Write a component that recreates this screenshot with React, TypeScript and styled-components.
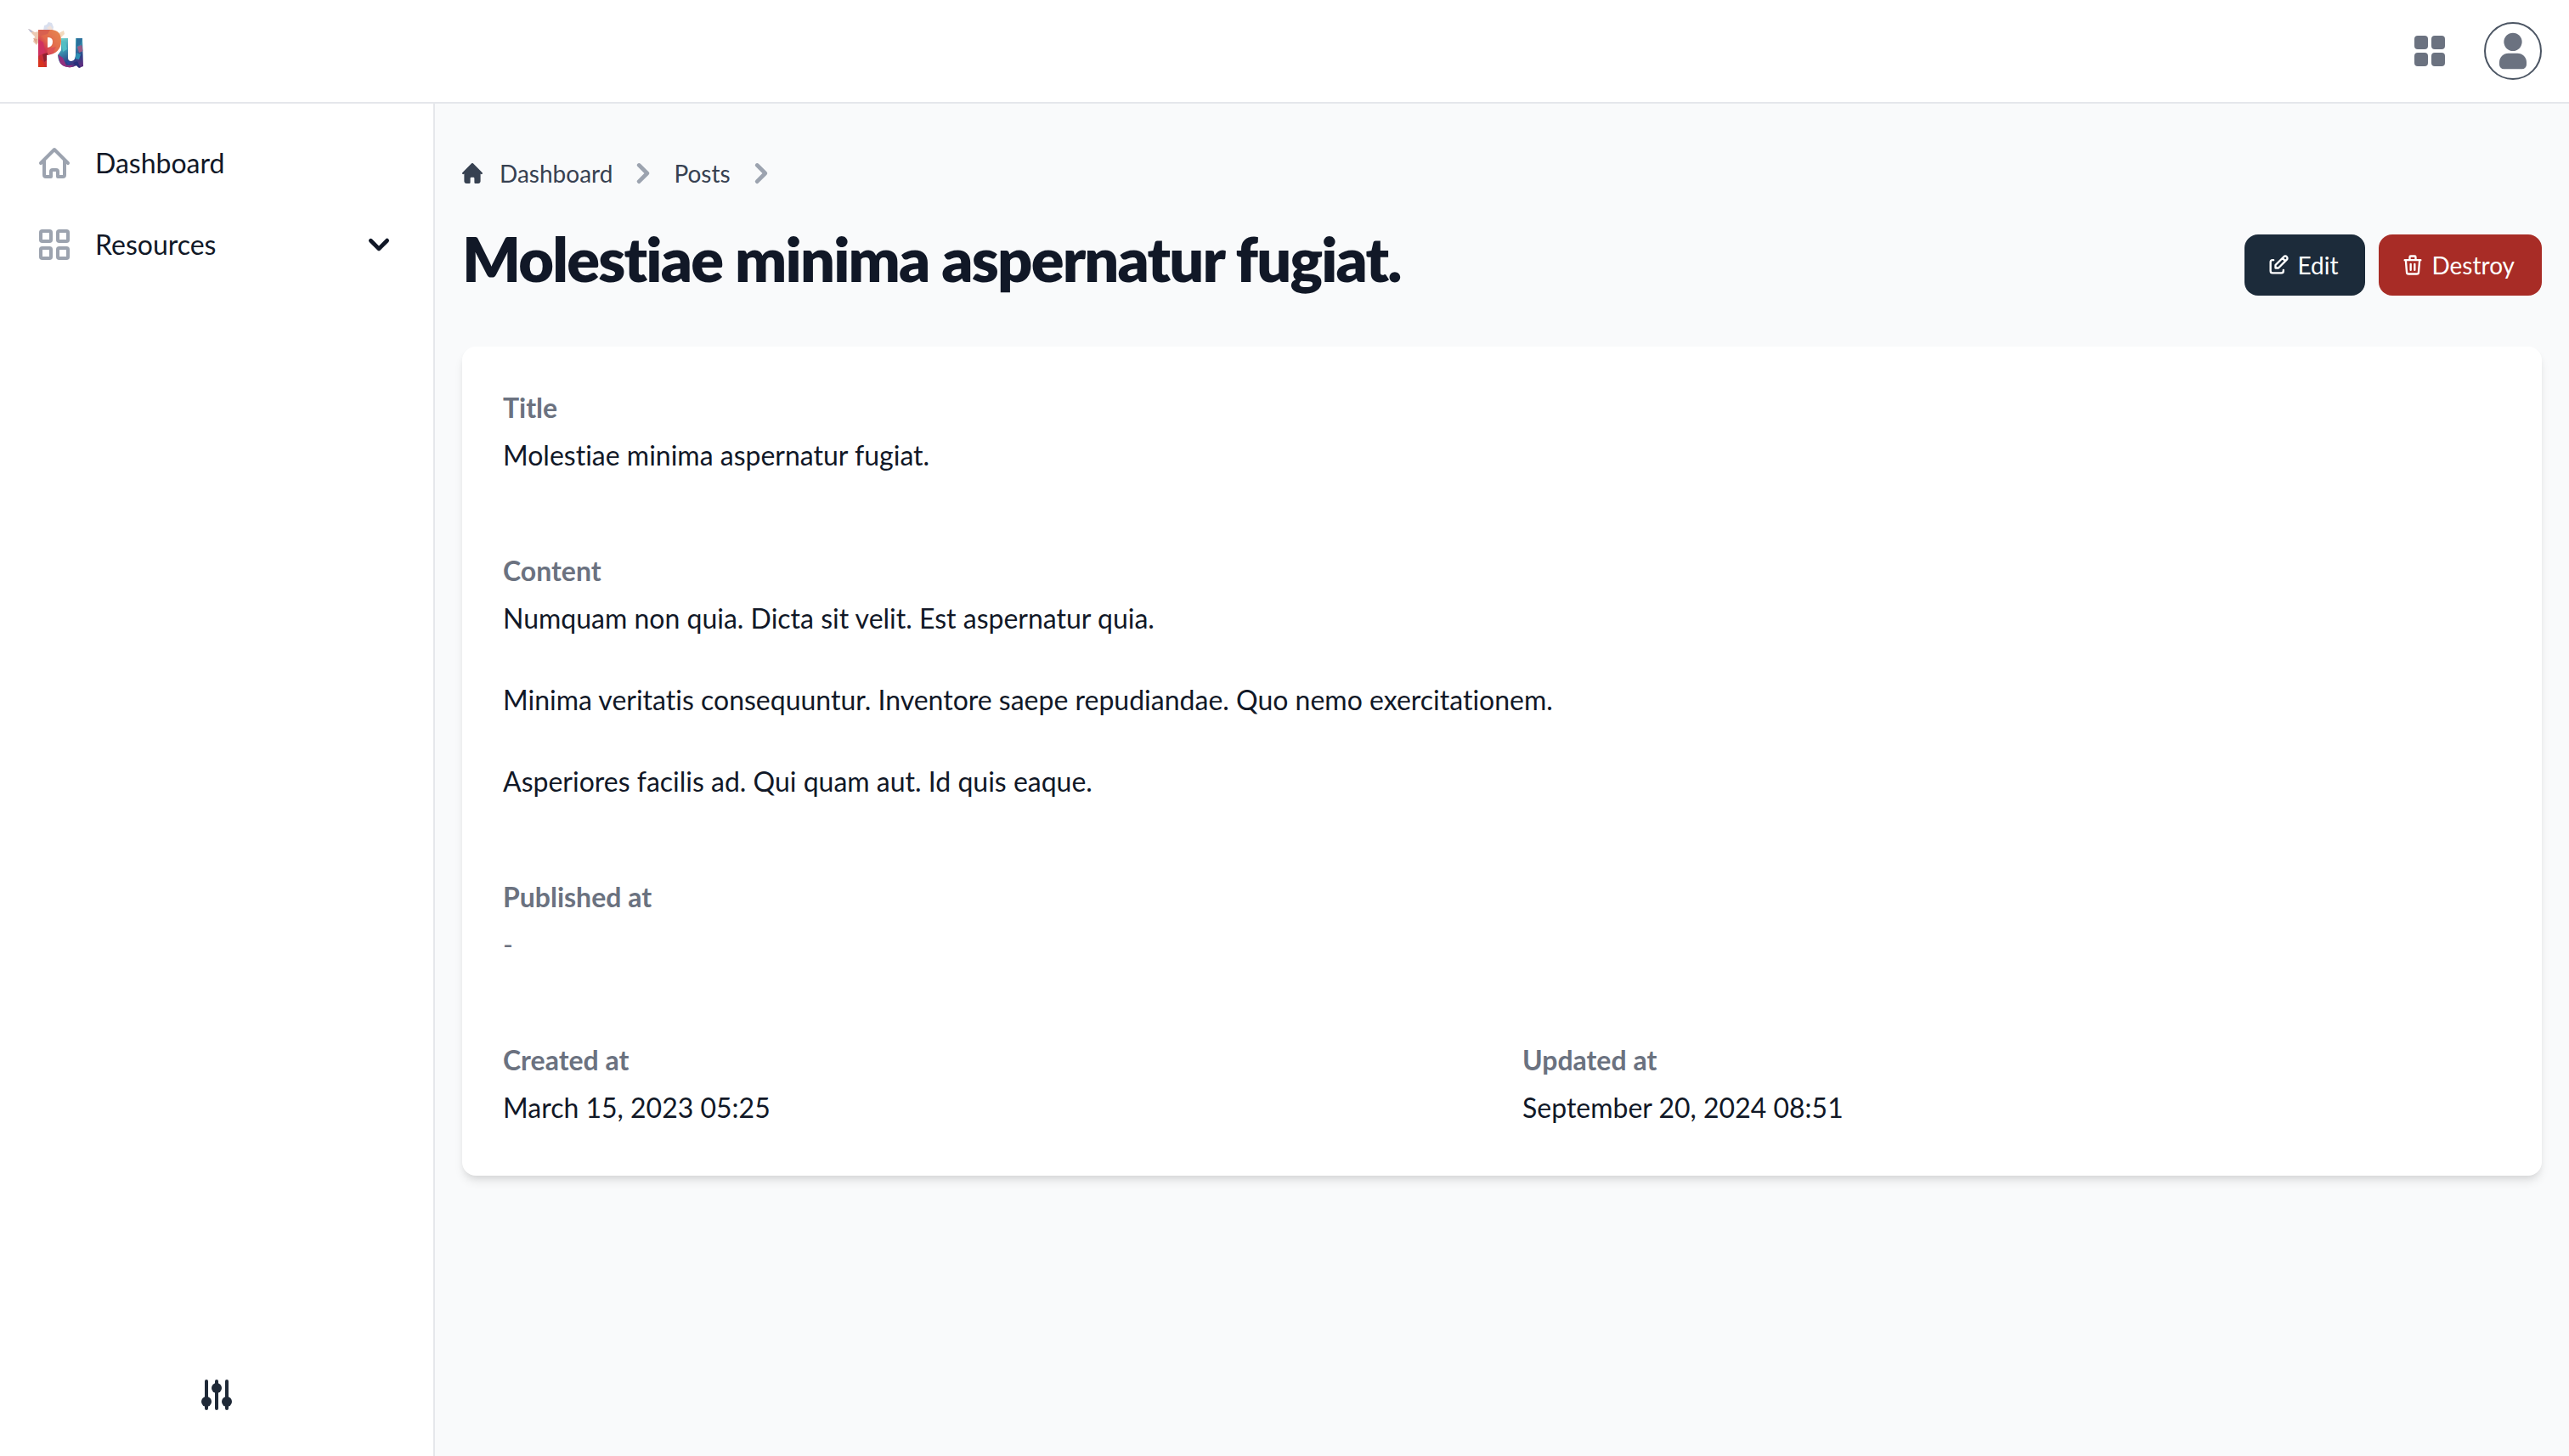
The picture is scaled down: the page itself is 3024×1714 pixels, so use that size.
import React from "react";
import styled, { createGlobalStyle } from "styled-components";

const GlobalStyle = createGlobalStyle`
  *, *::before, *::after { box-sizing: border-box; }
  body {
    margin: 0;
    background: #f9fafb;
    color: #111827;
    font: 400 32px/48px Lato, "Liberation Sans", sans-serif;
    font-variant-ligatures: none;
  }
  h1, p, dl, dd, ul, ol { margin: 0; padding: 0; }
  ul, ol { list-style: none; }
  a { color: inherit; text-decoration: none; }
  button { border: 0; background: none; padding: 0; color: inherit; font: inherit; cursor: pointer; }
  svg { display: block; flex: none; }
`;

const Shell = styled.div`
  display: flex;
  flex-direction: column;
  min-height: 100vh;
`;

const TopBar = styled.header`
  display: flex;
  align-items: center;
  justify-content: space-between;
  height: 122px;
  padding: 0 32px;
  background: #fff;
  border-bottom: 2px solid #e5e7eb;
`;

const TopActions = styled.div`
  display: flex;
  align-items: center;
  gap: 40px;
  color: #6b7280;
`;

const AvatarButton = styled.button`
  border: 2px solid #4b5563;
  border-radius: 50%;
`;

const Body = styled.div`
  display: flex;
  flex: 1;
`;

const Sidebar = styled.aside`
  display: flex;
  flex-direction: column;
  justify-content: space-between;
  flex: none;
  width: 512px;
  padding: 30px 24px 48px;
  background: #fff;
  border-right: 2px solid #e5e7eb;
`;

const NavList = styled.ul`
  display: flex;
  flex-direction: column;
  gap: 16px;
`;

const NavRow = styled.a`
  display: flex;
  align-items: center;
  width: 100%;
  padding: 16px;
  gap: 24px;
  text-align: left;
  > svg:first-child { color: #9ca3af; }
`;

const NavLabel = styled.span`
  flex: 1;
`;

const SettingsButton = styled.button`
  align-self: center;
  color: #1f2937;
`;

const Main = styled.main`
  flex: 1;
  min-width: 0;
  padding: 58px 32px 32px;
`;

const Crumbs = styled.ol`
  display: flex;
  align-items: center;
  gap: 12px;
  color: #374151;
  font-size: 28px;
  line-height: 40px;
  > li > svg { color: #9ca3af; }
`;

const Crumb = styled.li`
  display: flex;
  align-items: center;
  gap: 12px;
`;

const CrumbLink = styled.a`
  display: flex;
  align-items: center;
  gap: 20px;
`;

const TitleRow = styled.div`
  display: flex;
  align-items: center;
  justify-content: space-between;
  margin: 36px 0 48px;
`;

const Title = styled.h1`
  margin-bottom: 16px;
  font-size: 72px;
  line-height: 80px;
  font-weight: 800;
  letter-spacing: -0.025em;
`;

const Actions = styled.div`
  display: flex;
  gap: 16px;
`;

const ActionButton = styled.button<{ $color: string }>`
  display: flex;
  align-items: center;
  gap: 8px;
  padding: 16px 32px 16px 26px;
  border-radius: 16px;
  background: ${(p) => p.$color};
  color: #fff;
  font-size: 28px;
  line-height: 40px;
`;

const Card = styled.dl`
  display: grid;
  grid-template-columns: 1fr 1fr;
  gap: 80px 48px;
  padding: 48px;
  border-radius: 16px;
  background: #fff;
  box-shadow: 0 8px 12px -2px rgba(0, 0, 0, 0.1), 0 4px 8px -4px rgba(0, 0, 0, 0.1);
`;

const Field = styled.div<{ $wide?: boolean }>`
  grid-column: ${(p) => (p.$wide ? "1 / -1" : "auto")};
  padding-bottom: 8px;
`;

const FieldName = styled.dt`
  margin-bottom: 8px;
  color: #6b7280;
  font-weight: 700;
`;

const FieldValue = styled.dd<{ $muted?: boolean }>`
  color: ${(p) => (p.$muted ? "#6b7280" : "inherit")};
  white-space: pre-line;
`;

const Icon = ({ size, box = 24, children }: { size: number; box?: number; children: React.ReactNode }) => (
  <svg width={size} height={size} viewBox={`0 0 ${box} ${box}`} fill="none" aria-hidden="true">
    {children}
  </svg>
);

const stroke = { stroke: "currentColor", strokeWidth: 2, strokeLinecap: "round", strokeLinejoin: "round" } as const;

const pShape = "M13 11h16q11 1 11 13 0 15-17 17v14H13V30ZM24 20v12q6-1 6-7 0-5-6-5Z";
const uShape = "M40 21h8v23q0 4 4 4 5-1 5-8V21h8l1 33-5 2-3-3q-5 3-10 2-11-1-12-14l4-6Z";

const Logo = () => (
  <svg width="68" height="72" viewBox="0 0 68 72" role="img" aria-label="Pu">
    <defs>
      <linearGradient id="p" x1="0.8" y1="0" x2="0.1" y2="1">
        <stop offset="0" stopColor="#e6844f" />
        <stop offset="0.4" stopColor="#e2694c" />
        <stop offset="0.6" stopColor="#cf3350" />
        <stop offset="1" stopColor="#c42a20" />
      </linearGradient>
      <linearGradient id="u" x1="0.2" y1="0" x2="0.6" y2="1">
        <stop offset="0" stopColor="#6ccfca" />
        <stop offset="0.4" stopColor="#3a8fae" />
        <stop offset="0.75" stopColor="#2c4387" />
        <stop offset="1" stopColor="#5a2f80" />
      </linearGradient>
      <clipPath id="pc"><path clipRule="evenodd" d={pShape} /></clipPath>
      <clipPath id="uc"><path d={uShape} /></clipPath>
    </defs>
    <path d="M19 12 20 6 23 5 25 2 29 3 31 8 30 12Z" fill="#d9dfee" />
    <path d="M23 9l4-3 3 4-2 2Z" fill="#f0e1da" />
    <path d="M1 10 4 11 9 14 13 13 14 25 11 29 7 25 9 19 6 16Z" fill="#ecc9b2" />
    <path d="M1 10 4 11 7 14 4 14Z" fill="#b9bfd6" />
    <path d="M7 21l5 1-1 6Z" fill="#e0a58c" />
    <path d="M37 15 43 12 44 16 40 20Z" fill="#f3d9bd" />
    <path d={uShape} fill="url(#u)" />
    <g clipPath="url(#uc)">
      <path d="M36 40l6 4 4 9 8 0-4 4-10-2Z" fill="#93307f" />
      <path d="M40 24l5 2 2 8-5 3Z" fill="#52bfc4" />
      <path d="M58 21l7 0-2 7-5 3Z" fill="#2b6f9c" />
      <path d="M59 31l5-2 2 7-5 2Z" fill="#9a5b86" />
      <path d="M58 38l5 2-2 6-5-1Z" fill="#2d8fb4" />
      <path d="M45 47l6 2-2 4Z" fill="#274a9c" />
      <path d="M54 50l5-2 4 8-5-1Z" fill="#27307a" />
    </g>
    <path fillRule="evenodd" d={pShape} fill="url(#p)" />
    <g clipPath="url(#pc)">
      <path d="M13 11h14l-3 5-11 3Z" fill="#d8604f" />
      <path d="M13 22l6 4 2 12-8 4Z" fill="#cf3160" />
      <path d="M24 34l10-3-4 7-7 4Z" fill="#dc5256" />
      <path d="M18 40l6-2v8l-4 3Z" fill="#8f2030" />
      <path d="M13 45l5 3 3 7h-8Z" fill="#d8341f" />
    </g>
  </svg>
);

const CrumbChevron = () => (
  <Icon size={48} box={20}>
    <path fill="currentColor" d="M7.293 14.707a1 1 0 010-1.414L10.586 10 7.293 6.707a1 1 0 011.414-1.414l4 4a1 1 0 010 1.414l-4 4a1 1 0 01-1.414 0z" />
  </Icon>
);

const fields = [
  { name: "Title", value: "Molestiae minima aspernatur fugiat.", wide: true },
  {
    name: "Content",
    value:
      "Numquam non quia. Dicta sit velit. Est aspernatur quia.\n\nMinima veritatis consequuntur. Inventore saepe repudiandae. Quo nemo exercitationem.\n\nAsperiores facilis ad. Qui quam aut. Id quis eaque.",
    wide: true,
  },
  { name: "Published at", value: "-", wide: true, muted: true },
  { name: "Created at", value: "March 15, 2023 05:25" },
  { name: "Updated at", value: "September 20, 2024 08:51" },
];

export default function App() {
  return (
    <Shell>
      <GlobalStyle />
      <TopBar>
        <a href="#"><Logo /></a>
        <TopActions>
          <button aria-label="Apps">
            <Icon size={48}>
              {[3, 13].map((y) => [3, 13].map((x) => (
                <rect key={`${x}-${y}`} x={x} y={y} width="8" height="8" rx="2" fill="currentColor" />
              )))}
            </Icon>
          </button>
          <AvatarButton aria-label="Account">
            <Icon size={64}>
              <path fill="currentColor" d="M12 4a4 4 0 1 0 0 8 4 4 0 0 0 0-8Zm-2 9a4 4 0 0 0-4 4v1a2 2 0 0 0 2 2h8a2 2 0 0 0 2-2v-1a4 4 0 0 0-4-4h-4Z" />
            </Icon>
          </AvatarButton>
        </TopActions>
      </TopBar>
      <Body>
        <Sidebar>
          <nav>
            <NavList>
              <li>
                <NavRow href="#">
                  <Icon size={48}>
                    <path {...stroke} d="m4 12 8-8 8 8M6 10.5V19a1 1 0 0 0 1 1h3v-3a1 1 0 0 1 1-1h2a1 1 0 0 1 1 1v3h3a1 1 0 0 0 1-1v-8.5" />
                  </Icon>
                  <NavLabel>Dashboard</NavLabel>
                </NavRow>
              </li>
              <li>
                <NavRow as="button">
                  <Icon size={48}>
                    {[4, 14].map((y) => [4, 14].map((x) => (
                      <rect key={`${x}-${y}`} x={x} y={y} width="6" height="6" rx="0.857" {...stroke} />
                    )))}
                  </Icon>
                  <NavLabel>Resources</NavLabel>
                  <Icon size={48} box={20}>
                    <path fill="currentColor" d="M5.293 7.293a1 1 0 011.414 0L10 10.586l3.293-3.293a1 1 0 111.414 1.414l-4 4a1 1 0 01-1.414 0l-4-4a1 1 0 010-1.414z" />
                  </Icon>
                </NavRow>
              </li>
            </NavList>
          </nav>
          <SettingsButton aria-label="Settings">
            <Icon size={48}>
              <path {...stroke} d="M6 4v16M12 4v16M18 4v16" />
              <circle cx="6" cy="16" r="3" fill="currentColor" />
              <circle cx="12" cy="8" r="3" fill="currentColor" />
              <circle cx="18" cy="16" r="3" fill="currentColor" />
            </Icon>
          </SettingsButton>
        </Sidebar>
        <Main>
          <nav aria-label="Breadcrumb">
            <Crumbs>
              <Crumb>
                <CrumbLink href="#">
                  <Icon size={24} box={20}>
                    <path fill="currentColor" d="m19.707 9.293-2-2-7-7a1 1 0 0 0-1.414 0l-7 7-2 2a1 1 0 0 0 1.414 1.414L2 10.414V18a2 2 0 0 0 2 2h3a1 1 0 0 0 1-1v-4a1 1 0 0 1 1-1h2a1 1 0 0 1 1 1v4a1 1 0 0 0 1 1h3a2 2 0 0 0 2-2v-7.586l.293.293a1 1 0 0 0 1.414-1.414Z" />
                  </Icon>
                  Dashboard
                </CrumbLink>
                <CrumbChevron />
              </Crumb>
              <Crumb>
                <CrumbLink href="#">Posts</CrumbLink>
                <CrumbChevron />
              </Crumb>
            </Crumbs>
          </nav>
          <TitleRow>
            <Title>Molestiae minima aspernatur fugiat.</Title>
            <Actions>
              <ActionButton $color="#1c2b3a">
                <Icon size={28}>
                  <path {...stroke} d="M7 7H6a2 2 0 0 0-2 2v9a2 2 0 0 0 2 2h9a2 2 0 0 0 2-2v-1M20.385 6.585a2.1 2.1 0 0 0-2.97-2.97L9 12v3h3l8.385-8.415zM16 5l3 3" />
                </Icon>
                Edit
              </ActionButton>
              <ActionButton $color="#a82c26">
                <Icon size={28}>
                  <path {...stroke} d="M4 7h16M10 11v6M14 11v6M5 7l1 12a2 2 0 0 0 2 2h8a2 2 0 0 0 2-2l1-12M9 7V4a1 1 0 0 1 1-1h4a1 1 0 0 1 1 1v3" />
                </Icon>
                Destroy
              </ActionButton>
            </Actions>
          </TitleRow>
          <Card>
            {fields.map((f) => (
              <Field key={f.name} $wide={f.wide}>
                <FieldName>{f.name}</FieldName>
                <FieldValue $muted={f.muted}>{f.value}</FieldValue>
              </Field>
            ))}
          </Card>
        </Main>
      </Body>
    </Shell>
  );
}
